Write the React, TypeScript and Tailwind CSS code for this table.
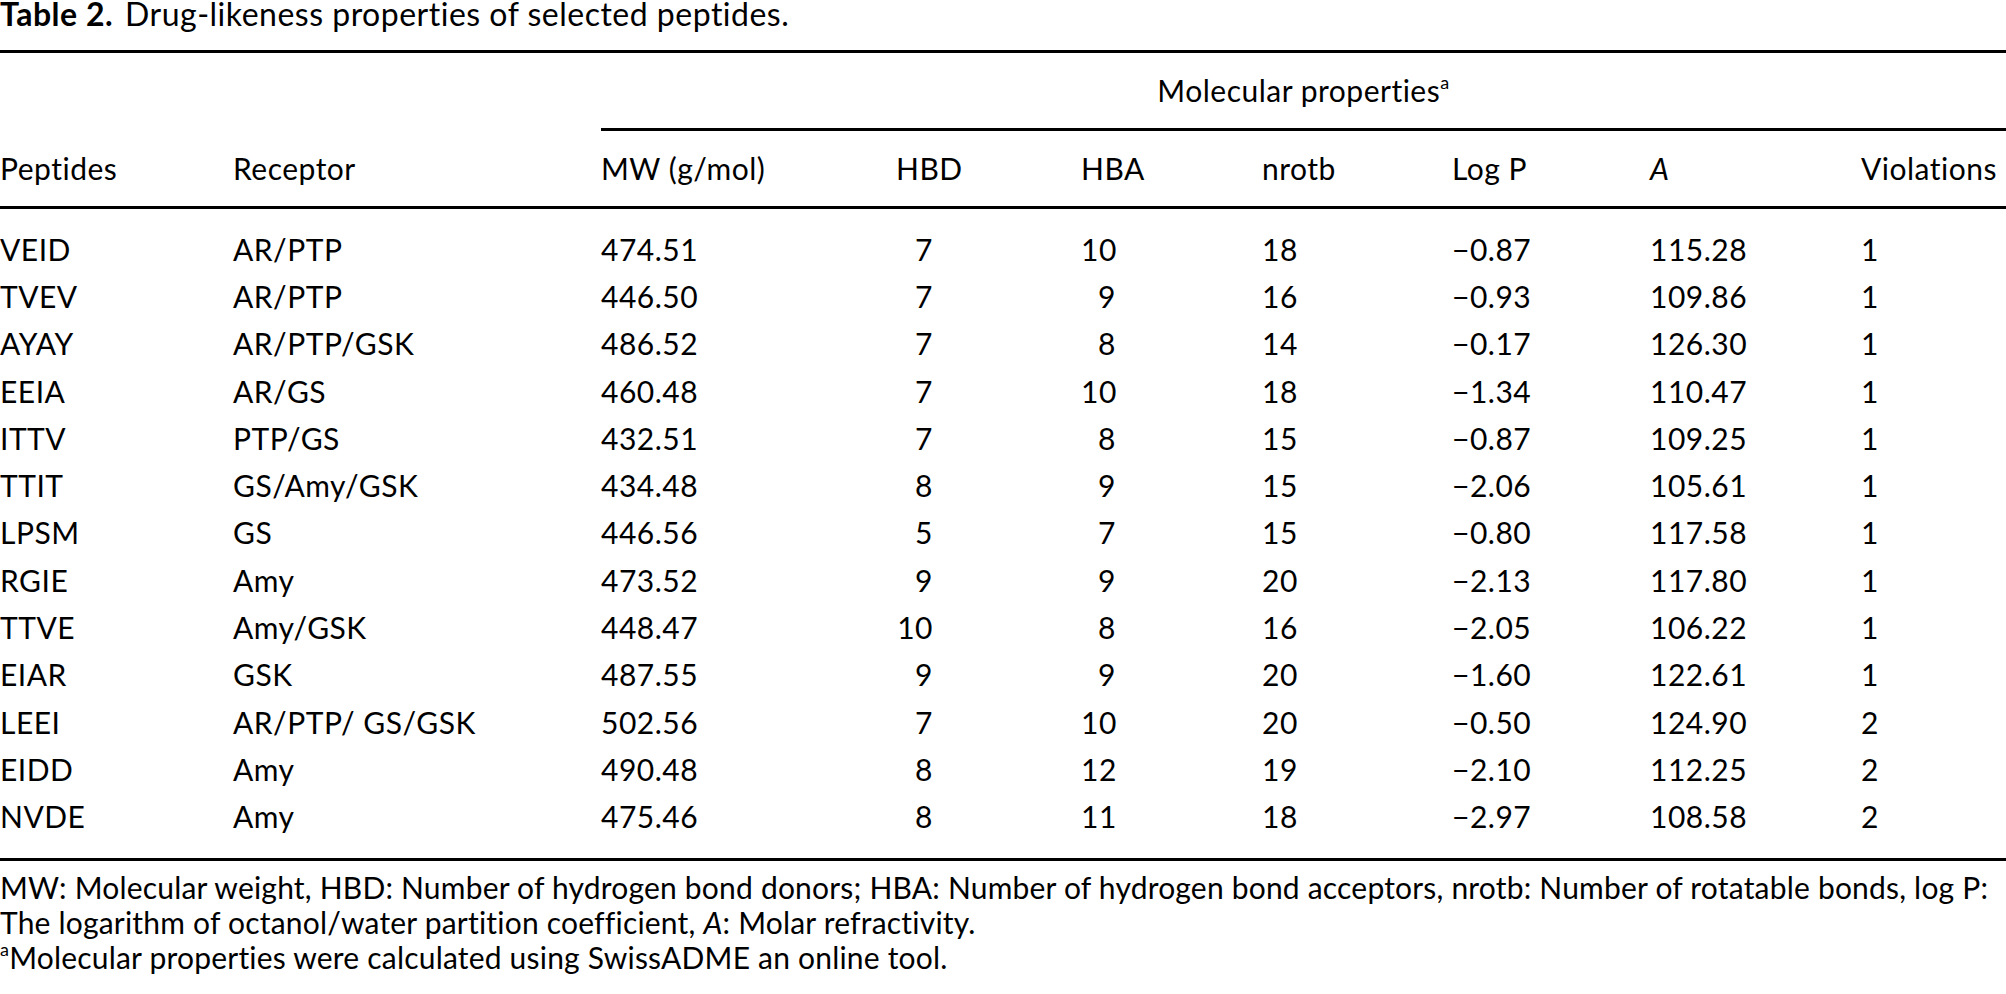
const rows = [
  ["VEID", "AR/PTP", "474.51", "7", "10", "18", "−0.87", "115.28", "1"],
  ["TVEV", "AR/PTP", "446.50", "7", "9", "16", "−0.93", "109.86", "1"],
  ["AYAY", "AR/PTP/GSK", "486.52", "7", "8", "14", "−0.17", "126.30", "1"],
  ["EEIA", "AR/GS", "460.48", "7", "10", "18", "−1.34", "110.47", "1"],
  ["ITTV", "PTP/GS", "432.51", "7", "8", "15", "−0.87", "109.25", "1"],
  ["TTIT", "GS/Amy/GSK", "434.48", "8", "9", "15", "−2.06", "105.61", "1"],
  ["LPSM", "GS", "446.56", "5", "7", "15", "−0.80", "117.58", "1"],
  ["RGIE", "Amy", "473.52", "9", "9", "20", "−2.13", "117.80", "1"],
  ["TTVE", "Amy/GSK", "448.47", "10", "8", "16", "−2.05", "106.22", "1"],
  ["EIAR", "GSK", "487.55", "9", "9", "20", "−1.60", "122.61", "1"],
  ["LEEI", "AR/PTP/ GS/GSK", "502.56", "7", "10", "20", "−0.50", "124.90", "2"],
  ["EIDD", "Amy", "490.48", "8", "12", "19", "−2.10", "112.25", "2"],
  ["NVDE", "Amy", "475.46", "8", "11", "18", "−2.97", "108.58", "2"],
];

const cols = "grid grid-cols-[233px_368px_295px_185px_181px_190px_198px_211px_1fr]";

export default function App() {
  return (
    <div className="w-[2006px] h-[994px] overflow-hidden bg-white text-black font-['Lato',sans-serif] text-[30px] tracking-[0.5px]">
      {/* caption */}
      <div className="h-[50px] text-[32px] leading-[28px] whitespace-nowrap">
        <span className="font-bold">Table 2.</span>
        <span className="ml-[12px]">Drug-likeness properties of selected peptides.</span>
      </div>
      <div className="h-[3px] bg-black" />

      {/* spanning header */}
      <div className={cols}>
        <div className="col-span-2" />
        <div className="col-span-7 border-b-[3px] border-black pt-[23px] pb-[24px] leading-[28px] text-center whitespace-nowrap">
          Molecular properties<span className="relative -top-[13px] text-[18px] leading-none">a</span>
        </div>
      </div>

      {/* column headers */}
      <div className={`${cols} border-b-[3px] border-black pt-[23px] pb-[24px] leading-[28px] whitespace-nowrap`}>
        <div>Peptides</div>
        <div>Receptor</div>
        <div>MW (g/mol)</div>
        <div>HBD</div>
        <div>HBA</div>
        <div>nrotb</div>
        <div>Log P</div>
        <div className="italic">A</div>
        <div>Violations</div>
      </div>

      {/* body */}
      <div className="border-b-[3px] border-black pt-[16px] pb-[18px]">
        {rows.map((r) => (
          <div key={r[0]} className={`${cols} h-[47.3px] items-center leading-[28px] whitespace-nowrap`}>
            <div>{r[0]}</div>
            <div>{r[1]}</div>
            <div>{r[2]}</div>
            <div className="w-[37px] text-right">{r[3]}</div>
            <div className="w-[35px] text-right">{r[4]}</div>
            <div>{r[5]}</div>
            <div>{r[6]}</div>
            <div>{r[7]}</div>
            <div>{r[8]}</div>
          </div>
        ))}
      </div>

      {/* notes */}
      <div className="mt-[9px] leading-[35px] tracking-[0.2px] whitespace-nowrap">
        <p>
          MW: Molecular weight, HBD: Number of hydrogen bond donors; HBA: Number of hydrogen bond acceptors, nrotb: Number of rotatable bonds, log P:
        </p>
        <p>
          The logarithm of octanol/water partition coefficient, <span className="italic">A</span>: Molar refractivity.
        </p>
        <p>
          <span className="relative -top-[13px] text-[18px] leading-none">a</span>Molecular properties were calculated using SwissADME an online tool.
        </p>
      </div>
    </div>
  );
}
